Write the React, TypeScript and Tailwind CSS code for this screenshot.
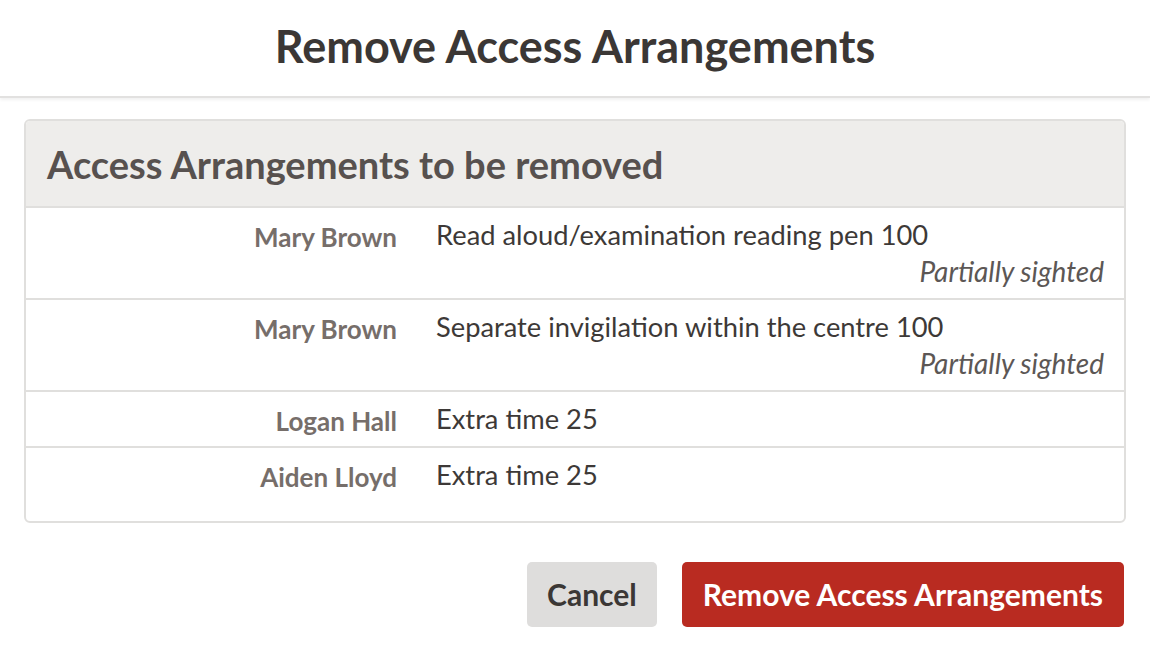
import React from "react"

const rows = [
  { name: "Mary Brown", text: "Read aloud/examination reading pen 100", note: "Partially sighted" },
  { name: "Mary Brown", text: "Separate invigilation within the centre 100", note: "Partially sighted" },
  { name: "Logan Hall", text: "Extra time 25" },
  { name: "Aiden Lloyd", text: "Extra time 25" },
]

export default function App() {
  return (
    <div className="w-[1150px] h-[662px] bg-white font-['Lato',sans-serif] overflow-hidden">
      <div className="h-[98px] flex items-center justify-center border-b-2 border-[#e2e1e0] shadow-[0_2px_3px_rgba(0,0,0,0.06)]">
        <h1 className="text-[45px] font-bold text-[#3b3735] pb-[2px]">Remove Access Arrangements</h1>
      </div>

      <div className="px-[24px] pt-[21px]">
        <div className="border-2 border-[#e0dfdd] rounded-[6px] overflow-hidden pb-[19px]">
          <div className="h-[87px] bg-[#eeedeb] border-b-2 border-[#e0dfdd] flex items-center px-[21px]">
            <h2 className="text-[38px] font-bold text-[#57514f] pt-[2px]">Access Arrangements to be removed</h2>
          </div>
          {rows.map((r, i) => (
            <div
              key={i}
              className={
                "flex py-[9px] leading-[36px] " +
                (i < rows.length - 1 ? "border-b-2 border-[#e0dfdd]" : "")
              }
            >
              <div className="w-[371px] shrink-0 text-right text-[26px] font-bold text-[#766e6a] translate-y-[2px]">
                {r.name}
              </div>
              <div className="flex-1 pl-[39px] pr-[20px] text-[27.3px] text-[#3d3937]">
                <div>{r.text}</div>
                {r.note && <div className="text-right italic text-[28px] text-[#5c5755]">{r.note}</div>}
              </div>
            </div>
          ))}
        </div>
      </div>

      <div className="flex justify-end gap-[25px] pr-[26px] pt-[39px]">
        <button className="h-[65px] px-[20px] rounded-[5px] bg-[#dedddc] text-[30px] font-bold text-[#3b3735]">
          Cancel
        </button>
        <button className="h-[65px] px-[21px] rounded-[5px] bg-[#b92b21] text-[30px] font-bold text-white">
          Remove Access Arrangements
        </button>
      </div>
    </div>
  )
}
